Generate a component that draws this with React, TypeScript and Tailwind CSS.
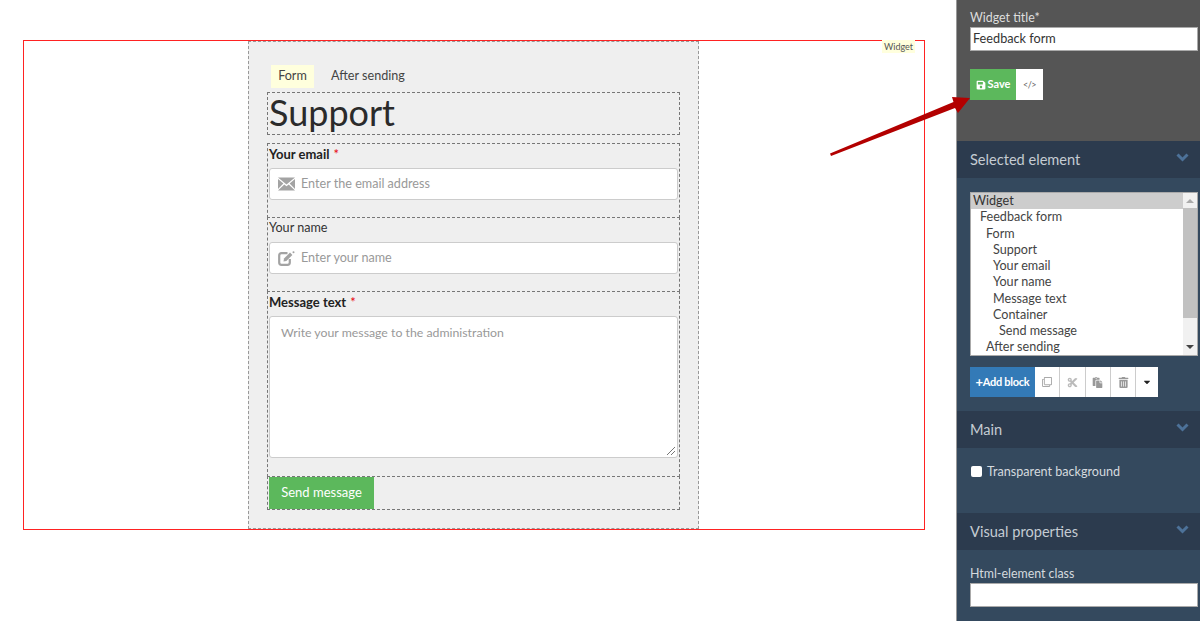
// Widget editor: form preview on the left, properties sidebar on the right.
import React from 'react';
import { FaCaretDown, FaCut, FaPaste, FaRegClone, FaSave, FaTrashAlt } from 'react-icons/fa';

const font = { fontFamily: 'Lato, "Open Sans", sans-serif' };

const MailIcon = () => (
    <svg width="17" height="14" viewBox="0 0 17 14" className="shrink-0">
        <path d="M0 0.5 H17 L8.5 7.5 Z" fill="#a3a3a3" />
        <path d="M0 2 L5.4 6.6 L0 12 Z M17 2 L11.6 6.6 L17 12 Z" fill="#a3a3a3" />
        <path d="M0 13.5 L6.3 7.5 L8.5 9.3 L10.7 7.5 L17 13.5 Z" fill="#a3a3a3" />
    </svg>
);

const EditIcon = () => (
    <svg width="17" height="15" viewBox="0 0 17 15" className="shrink-0">
        <path d="M9.5 2.2 H3.5 Q1.2 2.2 1.2 4.5 V11.5 Q1.2 13.8 3.5 13.8 H9.5 Q11.8 13.8 11.8 11.5 V8" fill="none" stroke="#a3a3a3" strokeWidth="2.2" />
        <path d="M5.5 10.5 L6 7.6 L12 1.6 L14.4 4 L8.4 10 Z" fill="#a3a3a3" />
        <circle cx="15.5" cy="1.2" r="1" fill="#a3a3a3" />
    </svg>
);

const Chevron = () => (
    <svg width="13" height="9" viewBox="0 0 13 9" className="-mt-[4px]">
        <path d="M1.5 1.5 L6.5 6.5 L11.5 1.5" fill="none" stroke="#4d7299" strokeWidth="3" />
    </svg>
);

const treeRows: [string, string][] = [
    ['Feedback form', 'pl-[9px]'],
    ['Form', 'pl-[15px]'],
    ['Support', 'pl-[22px]'],
    ['Your email', 'pl-[22px]'],
    ['Your name', 'pl-[22px]'],
    ['Message text', 'pl-[22px]'],
    ['Container', 'pl-[22px]'],
    ['Send message', 'pl-[28px]'],
    ['After sending', 'pl-[15px]'],
];

const SectionHeader = ({ title }: { title: string }) => (
    <div className="flex h-[37px] items-center justify-between bg-[#2c3b4e] pl-[13px] pr-[11px] text-[14.6px] text-[#c5ccd3]">
        <span>{title}</span>
        <Chevron />
    </div>
);

const FormField = ({ className, children }: { className: string; children: React.ReactNode }) => (
    <div className={`border border-dashed border-[#777] ${className}`}>{children}</div>
);

const ToolButton = ({ children }: { children: React.ReactNode }) => (
    <div className="flex h-full w-[25.3px] items-center justify-center border-r border-[#ccc] bg-white text-[#aaa]">{children}</div>
);

const FormPreview = () => (
    <div className="ml-[224px] h-full w-[451px] border-x border-t border-b border-dashed border-[#999] bg-[#efefef] px-[18px] pt-[23px]">
        <div className="flex h-[23px] pl-[4px] text-[12.6px] text-[#444]">
            <div className="flex w-[43px] items-center justify-center bg-[#ffffdd]">Form</div>
            <div className="flex items-center pl-[17px]">After sending</div>
        </div>
        <FormField className="mt-[4px] h-[43px] text-[36px] leading-[38px] text-[#2b2b2b]">
            <span className="pl-px">Support</span>
        </FormField>
        <FormField className="mt-[8px] h-[75px] px-px">
            <div className="h-[24px] pt-px text-[13px] leading-[18px] font-bold text-[#222]">
                Your email <span className="ml-px font-normal text-red-600">*</span>
            </div>
            <div className="flex h-[32px] items-center rounded-[3px] border border-[#ccc] bg-white pl-[8px] text-[12.6px] text-[#999]">
                <MailIcon />
                <span className="ml-[6px]">Enter the email address</span>
            </div>
        </FormField>
        <FormField className="-mt-px h-[75px] px-px">
            <div className="h-[24px] pt-px text-[12.6px] leading-[18px] text-[#333]">Your name</div>
            <div className="flex h-[32px] items-center rounded-[3px] border border-[#ccc] bg-white pl-[8px] text-[12.6px] text-[#999]">
                <EditIcon />
                <span className="ml-[6px]">Enter your name</span>
            </div>
        </FormField>
        <FormField className="-mt-px h-[186px] px-px">
            <div className="h-[24px] pt-px text-[13px] leading-[18px] font-bold text-[#222]">
                Message text <span className="ml-px font-normal text-red-600">*</span>
            </div>
            <div className="relative h-[142px] rounded-[3px] border border-[#ccc] bg-white px-[11px] py-[7px] text-[12.3px] leading-[18px] text-[#999]">
                Write your message to the administration
                <svg width="10" height="10" viewBox="0 0 10 10" className="absolute right-px bottom-px">
                    <path d="M1 9 L9 1 M5 9 L9 5" stroke="#777" strokeWidth="1" />
                </svg>
            </div>
        </FormField>
        <FormField className="-mt-px h-[34px] pl-px">
            <div className="flex h-full w-[105px] items-center justify-center bg-[#5cb85c] text-[13px] text-white">Send message</div>
        </FormField>
    </div>
);

const Sidebar = () => (
    <aside className="h-[621px] w-[244px] shrink-0 overflow-hidden border-l border-[#999] bg-[#34495e]">
        <div className="h-[141px] bg-[#555] pl-[13px] pt-[10px]">
            <div className="text-[12.4px] leading-[15px] text-[#ddd]">Widget title*</div>
            <div className="mt-[2px] flex h-[24px] w-[228px] items-center border border-[#aaa] bg-white pl-[2px] text-[12.7px] text-[#333]">Feedback form</div>
            <div className="mt-[18px] flex h-[31px]">
                <div className="flex w-[46px] items-center justify-center gap-[2px] bg-[#5cb85c] text-[11px] font-bold text-white">
                    <FaSave size={10} />
                    Save
                </div>
                <div className="flex w-[27px] items-center justify-center bg-white text-[9px] tracking-tighter text-[#666]">&lt;/&gt;</div>
            </div>
        </div>
        <SectionHeader title="Selected element" />
        <div className="h-[233px] pl-[13px] pt-[14px]">
            <div className="flex h-[164px] w-[228px] border border-[#aaa] bg-white text-[12.6px] leading-[16.25px] text-[#444]">
                <div className="min-w-0 flex-1 overflow-hidden">
                    <div className="bg-[#cdcdcd] pl-[2px] text-[#333]">Widget</div>
                    {treeRows.map(([label, indent]) => (
                        <div key={label} className={indent}>{label}</div>
                    ))}
                </div>
                <div className="flex w-[14px] flex-col items-center bg-[#f1f1f1]">
                    <div className="mt-[6px] h-0 w-0 border-x-[4px] border-b-[4px] border-x-transparent border-b-[#aaa]" />
                    <div className="mt-[5px] h-[110px] w-full bg-[#c1c1c1]" />
                    <div className="mt-auto mb-[6px] h-0 w-0 border-x-[4px] border-t-[4px] border-x-transparent border-t-[#444]" />
                </div>
            </div>
            <div className="mt-[11px] flex h-[30px]">
                <div className="flex w-[65px] items-center justify-center bg-[#337ab7] text-[11px] font-bold tracking-tight text-white">
                    <span className="text-[13px] leading-none">+</span>Add block
                </div>
                <ToolButton><FaRegClone size={10} /></ToolButton>
                <ToolButton><FaCut size={11} className="text-[#bbb]" /></ToolButton>
                <ToolButton><FaPaste size={11} className="text-[#999]" /></ToolButton>
                <ToolButton><FaTrashAlt size={11} className="text-[#999]" /></ToolButton>
                <div className="flex h-full w-[22px] items-center justify-center bg-white">
                    <FaCaretDown size={10} className="text-[#222]" />
                </div>
            </div>
        </div>
        <SectionHeader title="Main" />
        <div className="flex h-[65px] items-start pl-[14px] pt-[18px] text-[12.6px] leading-[11px] text-[#d5dade]">
            <div className="h-[11px] w-[11px] rounded-[2px] bg-white" />
            <span className="ml-[5px]">Transparent background</span>
        </div>
        <SectionHeader title="Visual properties" />
        <div className="pl-[13px] pt-[16px]">
            <div className="text-[12.4px] leading-[15px] text-[#d5dade]">Html-element class</div>
            <div className="mt-[2px] h-[24px] w-[228px] border border-[#aaa] bg-white" />
        </div>
    </aside>
);

export default function App() {
    return (
        <div className="relative flex h-[621px] w-[1200px] overflow-hidden bg-white" style={font}>
            <main className="flex-1 pl-[23px] pt-[40px]">
                <div className="relative h-[490px] w-[902px] border border-[#f22]">
                    <div className="flex h-full">
                        <FormPreview />
                    </div>
                    <div className="absolute -top-px right-[9px] flex h-[13px] w-[33px] items-center justify-center bg-[#ffffdd] text-[9px] text-[#555]">Widget</div>
                </div>
            </main>
            <Sidebar />
            {/* seta vermelha sobre o painel */}
            <svg width="160" height="80" viewBox="0 0 160 80" className="absolute left-[825px] top-[90px]">
                <path d="M5 63.5 L6 66 L130 18 L133 23 L145 8 L127 7 L128.5 12 Z" fill="#b30000" />
            </svg>
        </div>
    );
}
